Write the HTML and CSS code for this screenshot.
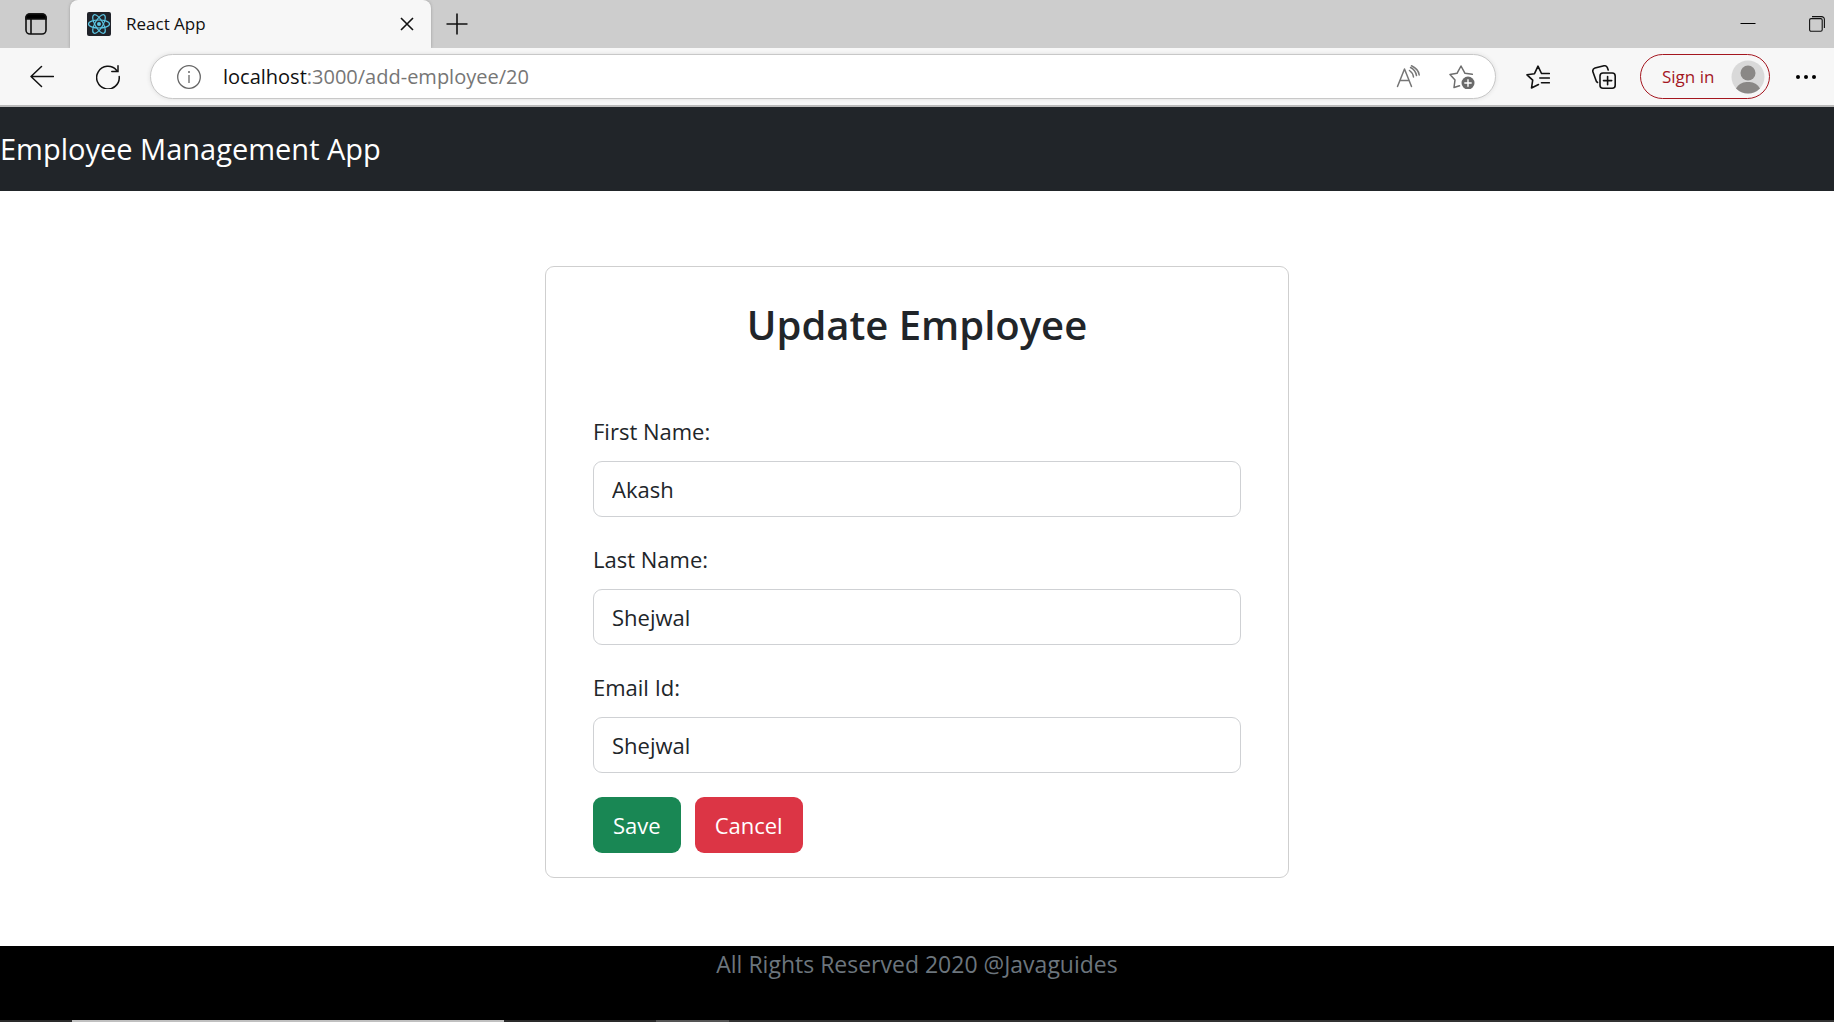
FILE: index.html
```html
<!DOCTYPE html>
<html lang="en">
<head>
<meta charset="utf-8">
<title>React App</title>
<meta name="viewport" content="width=device-width, initial-scale=1">
<link rel="stylesheet" href="styles.css">
</head>
<body>
<div class="window">
  <div class="tab-strip">
    <button class="icon-button tab-menu" type="button" aria-label="Tab actions">
      <svg width="24" height="24" viewBox="0 0 24 24" fill="none" stroke="#111" stroke-width="1.6"><rect x="2" y="2" width="20" height="20" rx="4"/><path d="M2 7V5.500a3.500 3.500 0 0 1 3.500-3.500h13a3.500 3.500 0 0 1 3.500 3.500V7z" fill="#000"/><path d="M7 7v15"/></svg>
    </button>
    <div class="tab">
      <svg width="24" height="24" viewBox="0 0 24 24" fill="none" stroke="#5cc8e6" stroke-width="1.2"><rect width="24" height="24" rx="2" fill="#20232a" stroke="none"/><ellipse cx="12" cy="12" rx="10.500" ry="4"/><ellipse cx="12" cy="12" rx="10.500" ry="4" transform="rotate(60 12 12)"/><ellipse cx="12" cy="12" rx="10.500" ry="4" transform="rotate(120 12 12)"/><circle cx="12" cy="12" r="2" fill="#5cc8e6" stroke="none"/></svg>
      <span class="tab-title">React App</span>
      <button class="icon-button" type="button" aria-label="Close tab">
        <svg width="14" height="14" viewBox="0 0 14 14" fill="none" stroke="#111" stroke-width="1.600"><path d="M1 1l12 12M13 1L1 13"/></svg>
      </button>
    </div>
    <button class="icon-button new-tab" type="button" aria-label="New tab">
      <svg width="22" height="22" viewBox="0 0 22 22" fill="none" stroke="#111" stroke-width="1.600"><path d="M11 0.500v21M0.500 11h21"/></svg>
    </button>
    <div class="window-controls">
      <button class="icon-button" type="button" aria-label="Minimize">
        <svg width="16" height="16" viewBox="0 0 16 16" fill="none" stroke="#000" stroke-width="1"><path d="M0.500 7.500h15"/></svg>
      </button>
      <button class="icon-button" type="button" aria-label="Restore">
        <svg width="16" height="16" viewBox="0 0 16 16" fill="none" stroke="#111" stroke-width="1.100"><rect x="0.600" y="2.600" width="12.600" height="12.600" rx="1.500"/><path d="M3 0.600h9.500a2.900 2.900 0 0 1 2.900 2.900V12"/></svg>
      </button>
    </div>
  </div>

  <div class="toolbar">
    <button class="icon-button" type="button" aria-label="Back">
      <svg width="24" height="24" viewBox="0 0 24 24" fill="none" stroke="#111" stroke-width="1.500" stroke-linecap="round" stroke-linejoin="round"><path d="M23.500 11.500H1M11.500 1.500L1 11.500l10.500 10"/></svg>
    </button>
    <button class="icon-button reload" type="button" aria-label="Reload">
      <svg width="24" height="24" viewBox="0 0 24 24" fill="none" stroke="#111" stroke-width="1.500" stroke-linecap="round"><path d="M23.200 11.500A11.300 11.300 0 1 1 20.500 5.200M22 0.800V6.500h-6.200"/></svg>
    </button>
    <div class="address-bar">
      <button class="icon-button" type="button" aria-label="Site information">
        <svg width="24" height="24" viewBox="0 0 24 24" fill="none" stroke="#666" stroke-width="1.300"><circle cx="12" cy="12" r="11.300"/><path d="M12 10v8"/><circle cx="12" cy="7" r="1" fill="#666" stroke="none"/></svg>
      </button>
      <div class="url" role="textbox" aria-label="Address" contenteditable="true" spellcheck="false"><span class="url-host">localhost</span>:3000/add-employee/20</div>
      <div class="address-actions">
        <button class="icon-button" type="button" aria-label="Read aloud">
          <svg width="24" height="24" viewBox="0 0 24 24" fill="none" stroke="#767676" stroke-width="1.500" stroke-linecap="round" stroke-linejoin="round"><path d="M1.500 21.500L8.500 4l7 17.500M4 15.500h9M13.500 5.500Q17 8 17.500 12M14.500 2.500Q19.500 5 20.500 10.500M15.500 0.800Q22.500 4 23.200 10"/></svg>
        </button>
        <button class="icon-button" type="button" aria-label="Add to favorites">
          <svg width="26" height="24" viewBox="0 0 26 24" fill="none" stroke="#6e6e6e" stroke-width="1.500" stroke-linecap="round" stroke-linejoin="round"><path d="M10.500 20.800L5 22.500l1-7.500-5-5.500 7-1.200L12 1l4 7.300 7.300 1"/><circle cx="19" cy="18" r="6.500" fill="#6a6a6a" stroke="none"/><path d="M19 14.800v6.400M15.800 18h6.400" stroke="#fff" stroke-width="1.400"/></svg>
        </button>
      </div>
    </div>
    <button class="icon-button favorites" type="button" aria-label="Favorites">
      <svg width="24" height="24" viewBox="0 0 24 24" fill="none" stroke="#111" stroke-width="1.600" stroke-linecap="round" stroke-linejoin="round"><path d="M12.500 19.500L5.500 23l1.200-7.800L1 9.800l7.500-1.100L12 1.200l3.500 7.300M15.500 8.500h7.800M13.800 13h9.500M15.500 17.800h7.800"/></svg>
    </button>
    <button class="icon-button collections" type="button" aria-label="Collections">
      <svg width="24" height="24" viewBox="0 0 24 24" fill="none" stroke="#111" stroke-width="1.600" stroke-linecap="round" stroke-linejoin="round"><rect x="8" y="8" width="15.200" height="15.200" rx="3"/><path d="M15.600 11.500v8.200M11.500 15.600h8.200M5.500 17.500Q4.200 16.800 3.500 14L0.800 6.500Q0.500 3.800 3 3L12 0.800Q14.500 0.500 15.300 2.500L16.200 5"/></svg>
    </button>
    <button class="sign-in" type="button">Sign in
      <svg width="34" height="34" viewBox="0 0 34 34" fill="#8a8886"><circle cx="17" cy="17" r="16.500" fill="#d9d9d9"/><circle cx="17" cy="13" r="7.500"/><path d="M5 28.500C8 23 13 22 17 22s9 1 12 6.500A17 17 0 0 1 5 28.500z"/></svg>
    </button>
    <button class="icon-button more" type="button" aria-label="Settings and more">
      <svg width="24" height="24" viewBox="0 0 24 24" fill="#000"><circle cx="4" cy="12" r="2"/><circle cx="12" cy="12" r="2"/><circle cx="20" cy="12" r="2"/></svg>
    </button>
  </div>

  <header class="navbar"><a class="brand" href="#">Employee Management App</a></header>

  <main class="content">
    <form class="card">
      <h2 class="card-title">Update Employee</h2>
      <div class="field">
        <label for="first-name">First Name:</label>
        <input id="first-name" type="text" value="Akash">
      </div>
      <div class="field">
        <label for="last-name">Last Name:</label>
        <input id="last-name" type="text" value="Shejwal">
      </div>
      <div class="field">
        <label for="email-id">Email Id:</label>
        <input id="email-id" type="text" value="Shejwal">
      </div>
      <div class="actions">
        <button class="button button-save" type="button">Save</button>
        <button class="button button-cancel" type="button">Cancel</button>
      </div>
    </form>
  </main>

  <footer class="footer">All Rights Reserved 2020 @Javaguides</footer>
  <div class="taskbar-edge"><span class="edge-start"></span><span class="edge-search"></span><span class="edge-gap"></span><span class="edge-active"></span></div>
</div>
</body>
</html>
```
FILE: styles.css
```css
* {
  box-sizing: border-box;
}

body {
  margin: 0;
  background: #fff;
  color: #212529;
  font: 22px/36px "Open Sans", "Noto Sans", sans-serif;
}

button,
input {
  font: inherit;
}

svg {
  display: block;
  flex: none;
}

.window {
  display: flex;
  flex-direction: column;
  min-height: 100vh;
}

.icon-button {
  flex: none;
  padding: 0;
  border: 0;
  background: none;
}

/* Browser tabs */
.tab-strip {
  display: flex;
  align-items: center;
  height: 48px;
  padding: 0 9px 0 24px;
  background: #cdcdcd;
}

.tab {
  display: flex;
  align-items: center;
  gap: 15px;
  width: 361px;
  height: 48px;
  margin-left: 22px;
  padding: 0 17px;
  border-radius: 8px 8px 0 0;
  background: #f7f7f7;
  box-shadow: 0 0 3px #999;
  clip-path: inset(0 -4px);
}

.tab-title {
  flex: 1;
  color: #111;
  font-size: 17px;
}

.new-tab {
  margin-left: 15px;
}

.window-controls {
  display: flex;
  gap: 53px;
  margin-left: auto;
}

/* Browser toolbar */
.toolbar {
  display: flex;
  align-items: center;
  height: 59px;
  padding: 0 16px 0 30px;
  border-bottom: 2px solid #bababa;
  background: #f7f7f7;
}

.reload {
  margin: 0 30px 0 42px;
}

.address-bar {
  display: flex;
  flex: 1;
  align-items: center;
  gap: 22px;
  min-width: 0;
  height: 45px;
  padding: 0 20px 0 26px;
  border: 1px solid #c8c8c8;
  border-radius: 23px;
  background: #fff;
  box-shadow: 0 0 4px #ddd;
}

.address-actions {
  display: flex;
  flex: none;
  gap: 29px;
}

.url {
  flex: 1;
  min-width: 0;
  overflow: hidden;
  outline: 0;
  color: #767676;
  font-size: 20px;
  white-space: nowrap;
}

.url-host {
  color: #111;
}

.favorites {
  margin: 0 42px 0 30px;
}

.sign-in {
  display: flex;
  flex: none;
  align-items: center;
  justify-content: space-between;
  width: 130px;
  height: 45px;
  margin: 0 24px;
  padding: 0 4px 0 21px;
  border: 1px solid #a4161f;
  border-radius: 23px;
  background: none;
  color: #a4161f;
  font-size: 17px;
}

/* Application */
.navbar {
  padding: 24px 0;
  background: #212529;
}

.brand {
  display: block;
  color: #fff;
  font-size: 29px;
  text-decoration: none;
}

.content {
  flex: 1;
  padding: 75px 24px 68px;
}

.card {
  max-width: 744px;
  margin: 0 auto;
  padding: 34px 47px 24px;
  border: 1px solid #cfcfcf;
  border-radius: 9px;
}

.card-title {
  margin: 0 0 64px;
  font-size: 40px;
  font-weight: 600;
  line-height: 48px;
  text-align: center;
}

.field {
  display: flex;
  flex-direction: column;
  gap: 12px;
  margin-bottom: 24px;
}

.field input {
  width: 100%;
  height: 56px;
  padding: 0 18px;
  border: 1px solid #cfd1d4;
  border-radius: 9px;
  background: #fff;
  color: #212529;
}

.actions {
  display: flex;
  gap: 14px;
}

.button {
  height: 56px;
  padding: 0 20px;
  border: 0;
  border-radius: 9px;
  color: #fff;
}

.button-save {
  background: #198754;
}

.button-cancel {
  background: #dc3545;
}

.footer {
  height: 74px;
  background: #000;
  color: #6c757d;
  font-size: 23px;
  text-align: center;
}

.taskbar-edge {
  display: flex;
  height: 2px;
  background: #333;
}

.edge-start {
  width: 72px;
  background: #2a2a2a;
}

.edge-search {
  width: 432px;
  background: #c0c0c0;
}

.edge-gap {
  width: 152px;
  background: #2a2a2a;
}

.edge-active {
  width: 73px;
  background: #555;
}
```
